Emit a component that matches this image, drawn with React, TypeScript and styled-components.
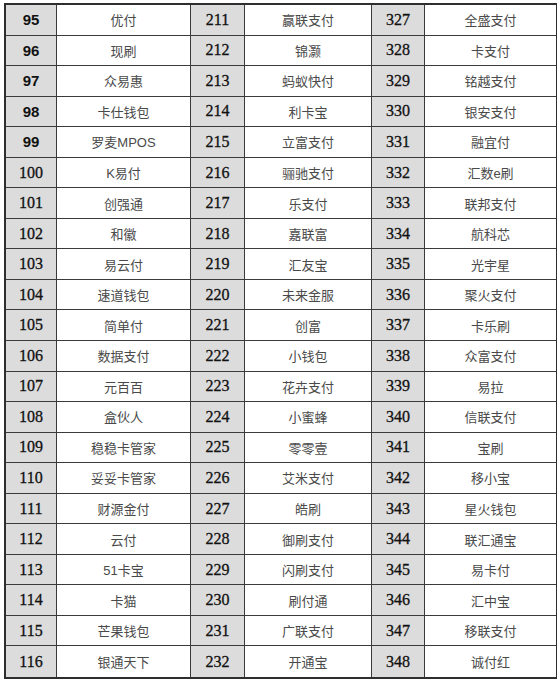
import styled, { createGlobalStyle } from "styled-components";

const GlobalStyle = createGlobalStyle`
  html, body {
    margin: 0;
    padding: 0;
    background: #ffffff;
  }
`;

const Page = styled.div`
  width: 560px;
  height: 681px;
  padding: 3px 3px 0 4px;
  box-sizing: border-box;
  background: #ffffff;
`;

const Grid = styled.div`
  display: grid;
  grid-template-columns: 51px 134px 54px 127px 53px 1fr;
  grid-auto-rows: 30.55px;
  width: 553px;
  box-sizing: border-box;
  border: 2px solid #2e2e2e;
  border-right-width: 1.5px;
`;

const Cell = styled.div<{ $last?: boolean; $bottom?: boolean }>`
  display: flex;
  align-items: center;
  justify-content: center;
  box-sizing: border-box;
  border-right: ${(p) => (p.$last ? "none" : "1.5px solid #3a3a3a")};
  border-bottom: ${(p) => (p.$bottom ? "none" : "1.5px solid #3a3a3a")};
`;

const NumCell = styled(Cell)<{ $sans?: boolean }>`
  background: #dcdcdc;
  color: #111;
  font-family: ${(p) =>
    p.$sans ? `"Liberation Sans", Arial, sans-serif` : `"Liberation Serif", "Times New Roman", serif`};
  font-weight: ${(p) => (p.$sans ? 700 : 400)};
  font-size: ${(p) => (p.$sans ? "15px" : "16px")};
  -webkit-text-stroke: ${(p) => (p.$sans ? "0" : "0.3px")};
`;

const NameCell = styled(Cell)`
  color: #4a4a4a;
  font-family: "Liberation Sans", "Noto Sans CJK SC", sans-serif;
  font-size: 13px;
`;

const col1 = ["优付", "现刷", "众易惠", "卡仕钱包", "罗麦MPOS", "K易付", "创强通", "和徽", "易云付", "速道钱包", "简单付", "数据支付", "元百百", "盒伙人", "稳稳卡管家", "妥妥卡管家", "财源金付", "云付", "51卡宝", "卡猫", "芒果钱包", "银通天下"];
const col2 = ["赢联支付", "锦灏", "蚂蚁快付", "利卡宝", "立富支付", "骊驰支付", "乐支付", "嘉联富", "汇友宝", "未来金服", "创富", "小钱包", "花卉支付", "小蜜蜂", "零零壹", "艾米支付", "皓刷", "御刷支付", "闪刷支付", "刷付通", "广联支付", "开通宝"];
const col3 = ["全盛支付", "卡支付", "铭越支付", "银安支付", "融宜付", "汇数e刷", "联邦支付", "航科芯", "光宇星", "聚火支付", "卡乐刷", "众富支付", "易拉", "信联支付", "宝刷", "移小宝", "星火钱包", "联汇通宝", "易卡付", "汇中宝", "移联支付", "诚付红"];

export default function App() {
  const lastRow = col1.length - 1;
  return (
    <>
      <GlobalStyle />
      <Page>
        <Grid>
          {col1.map((name, i) => {
            const b = i === lastRow;
            return [
              <NumCell key={`a${i}`} $bottom={b} $sans={95 + i < 100}>{95 + i}</NumCell>,
              <NameCell key={`b${i}`} $bottom={b}>{name}</NameCell>,
              <NumCell key={`c${i}`} $bottom={b}>{211 + i}</NumCell>,
              <NameCell key={`d${i}`} $bottom={b}>{col2[i]}</NameCell>,
              <NumCell key={`e${i}`} $bottom={b}>{327 + i}</NumCell>,
              <NameCell key={`f${i}`} $bottom={b} $last>{col3[i]}</NameCell>,
            ];
          })}
        </Grid>
      </Page>
    </>
  );
}
